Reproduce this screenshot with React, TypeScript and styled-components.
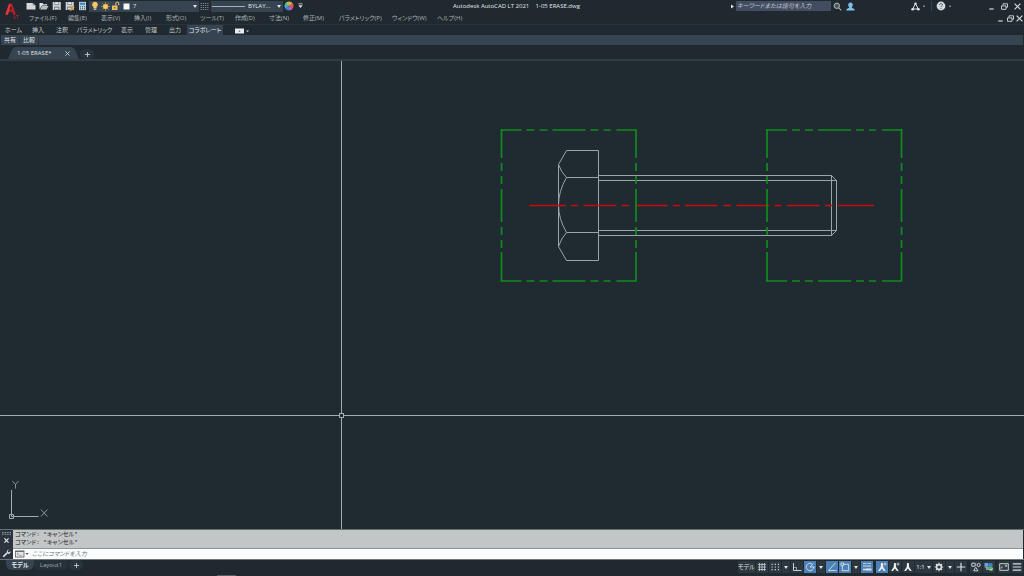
import React from "react";
import styled, { createGlobalStyle, css } from "styled-components";

const color = {
  base: "#1f292f",
  canvas: "#1f2a31",
  panel: "#364350",
  button: "#2c373f",
  active: "#4c81b8",
  text: "#c3c8ca",
  bright: "#e4e8ea",
  line: "#a3abaf",
};

const GlobalStyle = createGlobalStyle`
  * { box-sizing: border-box; }
  body {
    margin: 0;
    background: ${color.base};
    color: ${color.text};
    font-family: "Open Sans", "Noto Sans CJK JP", sans-serif;
    font-size: 6px;
    line-height: 10px;
    font-feature-settings: "palt";
  }
  button, input, select {
    margin: 0;
    padding: 0;
    border: 0;
    background: none;
    color: inherit;
    font: inherit;
    font-feature-settings: inherit;
    outline: none;
  }
  svg { display: block; flex: none; }
`;

const Page = styled.div`
  display: flex;
  flex-direction: column;
  min-height: 100vh;
`;

/* ---------- title bar ---------- */

const TitleBar = styled.header`
  display: grid;
  grid-template-columns: 1fr auto 1fr;
  align-items: center;
  height: 12px;
`;

const TitleGroup = styled.div<{ $end?: boolean }>`
  display: flex;
  align-items: center;
  justify-content: ${(p) => (p.$end ? "flex-end" : "flex-start")};
  height: 12px;
`;

const Title = styled.h1`
  margin: 0;
  padding-left: 9px;
  font-size: 6px;
  font-weight: 400;
  line-height: 12px;
  color: ${color.bright};
  white-space: pre;
`;

const AppButton = styled.button`
  width: 24px;
  height: 12px;
  overflow: visible;
`;

const IconButton = styled.button<{ $w?: number }>`
  display: flex;
  align-items: center;
  justify-content: center;
  flex: none;
  width: ${(p) => p.$w ?? 13}px;
  height: 12px;
`;

const ComboBox = styled.div<{ $w: number }>`
  display: flex;
  align-items: center;
  width: ${(p) => p.$w}px;
  height: 11px;
  padding-right: 2px;
  background: ${color.panel};
`;

const ComboSelect = styled.select`
  appearance: none;
  flex: 1;
  min-width: 0;
  height: 11px;
  padding-left: 2px;
  color: ${color.bright};
`;

const SearchInput = styled.input`
  width: 95px;
  height: 10px;
  padding-left: 1px;
  background: #414d61;
  &::placeholder { color: ${color.text}; font-style: italic; opacity: 1; }
`;

const Divider = styled.span`
  width: 1px;
  height: 10px;
  background: ${color.panel};
`;

const Spacer = styled.span<{ $w: number }>`
  flex: none;
  width: ${(p) => p.$w}px;
`;

/* ---------- menu and ribbon ---------- */

const MenuBar = styled.nav`
  display: flex;
  align-items: center;
  height: 13px;
  padding-left: 29px;
  border-bottom: 1px solid #28343d;
`;

const MenuItem = styled.button<{ $w: number }>`
  flex: none;
  width: ${(p) => p.$w}px;
  text-align: left;
  white-space: nowrap;
  color: #aeb4b7;
`;

const WindowControls = styled.div`
  display: flex;
  margin-left: auto;
`;

const RibbonTabs = styled.div`
  display: flex;
  height: 10px;
  padding-left: 1px;
`;

const RibbonTab = styled.button<{ $w: number; $active?: boolean }>`
  flex: none;
  width: ${(p) => p.$w}px;
  height: 10px;
  white-space: nowrap;
  ${(p) =>
    p.$active &&
    css`
      background: ${color.panel};
      color: ${color.bright};
    `}
`;

const RibbonPanels = styled.div`
  display: flex;
  align-items: center;
  height: 10px;
  margin: 0 1px;
  background: ${color.panel};
  color: ${color.bright};
`;

const PanelButton = styled.button`
  height: 10px;
  width: 19px;
  border-right: 1px solid #2c3843;
`;

const FileTabs = styled.div`
  display: flex;
  align-items: flex-end;
  height: 16px;
  padding-left: 8px;
  border-bottom: 2px solid #303c47;
`;

const FileTab = styled.div`
  display: flex;
  align-items: center;
  justify-content: space-between;
  width: 71px;
  height: 12px;
  padding: 0 9px;
  background: ${color.panel};
  color: ${color.bright};
  clip-path: polygon(0 100%, 4px 20%, 7px 0, 64px 0, 67px 20%, 100% 100%);
`;

const RoundButton = styled.button`
  display: flex;
  align-items: center;
  justify-content: center;
  width: 14px;
  height: 10px;
  margin: 0 1px;
  border-radius: 5px;
  background: #29343c;
`;

/* ---------- drawing area ---------- */

const Canvas = styled.main`
  position: relative;
  flex: 1;
  min-height: 240px;
  overflow: hidden;
  background: ${color.canvas};
`;

const Drawing = styled.svg`
  position: absolute;
  inset: 0;
  width: 100%;
  height: 100%;
`;

const UcsIcon = styled.svg`
  position: absolute;
  left: 0;
  bottom: 0;
`;

/* ---------- command window ---------- */

const CommandWindow = styled.section`
  display: flex;
  height: 31px;
  border-top: 1px solid #65706f;
  border-bottom: 1px solid #6e7678;
`;

const CommandGrip = styled.div`
  display: flex;
  flex-direction: column;
  align-items: center;
  justify-content: space-between;
  width: 13px;
  padding: 2px 0 1px;
  background: #2b343f;
`;

const GripButton = styled.button`
  display: flex;
  justify-content: center;
  width: 13px;
`;

const CommandBody = styled.div`
  display: flex;
  flex-direction: column;
  flex: 1;
  margin-right: 1px;
`;

const CommandLog = styled.div`
  height: 19px;
  padding: 1px 2px;
  background: #c3c6c6;
  border-bottom: 1px solid #8f9494;
  color: #1d2122;
  font-family: "Liberation Mono", "Noto Sans CJK JP", monospace;
  line-height: 8px;
`;

const LogLine = styled.p`
  margin: 0;
`;

const CommandRow = styled.label`
  display: flex;
  align-items: center;
  flex: 1;
  padding-left: 2px;
  background: #fbfdfd;
`;

const CommandInput = styled.input`
  flex: 1;
  height: 10px;
  margin-left: 3px;
  color: #222;
  &::placeholder { color: #6a6f70; font-style: italic; opacity: 1; }
`;

/* ---------- status bar ---------- */

const StatusBar = styled.footer`
  position: relative;
  display: flex;
  justify-content: space-between;
  height: 16px;
  padding: 0 1px 0 6px;
`;

const LayoutTabs = styled.div`
  display: flex;
  height: 10px;
`;

const LayoutTab = styled.button<{ $active?: boolean }>`
  width: ${(p) => (p.$active ? 28 : 34)}px;
  height: 10px;
  border-radius: 0 0 6px 6px;
  font-weight: ${(p) => (p.$active ? 600 : 400)};
  background: ${(p) => (p.$active ? color.panel : "#263139")};
  color: ${(p) => (p.$active ? color.bright : "#a5acb0")};
`;

const StatusTools = styled.div`
  display: flex;
  gap: 1px;
  padding-top: 1px;
`;

const StatusButton = styled.button<{ $w?: number; $on?: boolean; $gap?: boolean }>`
  display: flex;
  align-items: center;
  justify-content: center;
  gap: 2px;
  width: ${(p) => p.$w ?? 12}px;
  height: 12px;
  margin-left: ${(p) => (p.$gap ? 2 : 0)}px;
  background: ${(p) => (p.$on ? color.active : color.button)};
  color: ${color.bright};
  white-space: nowrap;
`;

const DockHandle = styled.span`
  position: absolute;
  left: 217px;
  bottom: 0;
  width: 19px;
  height: 1px;
  background: #5a6063;
`;

/* ---------- icons ---------- */

const Triangle = ({ size = 4 }: { size?: number }) => (
  <svg width={size} height="3" viewBox="0 0 4 3"><path d="M0 0h4L2 3z" fill="#dfe3e5" /></svg>
);

const Cross = ({ size = 5, stroke = "#d5dadc", width = 1 }: { size?: number; stroke?: string; width?: number }) => (
  <svg width={size} height={size} viewBox="0 0 6 6"><path d="M.5.5l5 5M5.5.5l-5 5" stroke={stroke} strokeWidth={width} /></svg>
);

const Plus = ({ size = 5 }: { size?: number }) => (
  <svg width={size} height={size} viewBox="0 0 5 5"><path d="M2.5 0v5M0 2.5h5" stroke="#c3c9cc" strokeWidth=".9" /></svg>
);

const AppLogo = () => (
  <svg width="24" height="20" viewBox="0 0 24 20">
    <path d="M5.300 14.500L9.200 3.500h2.800l3.900 11-2.700.2-1-3H8.900l-1 3zM9.500 9.600h2.300l-1.200-4z" fill="#b81f27" />
    <path d="M5.300 14.500L9.200 3.500l1.500 1.400-2.800 9.800z" fill="#e2383c" />
    <path d="M14.200 15.200v3h1.500M16.200 15.500h2.400m-1.200 0v2.900" stroke="#b0262c" strokeWidth=".9" fill="none" />
  </svg>
);

const NewIcon = () => (
  <svg width="10" height="8" viewBox="0 0 10 8"><path d="M.5 1h6l3 2.5V7.5h-9z" fill="#d4d8d8" /><path d="M6.5 1v2.5h3" fill="#9ba3a6" /></svg>
);
const OpenIcon = () => (
  <svg width="10" height="8" viewBox="0 0 10 8"><path d="M.5 7.2V1h3l1 1.2h3.7v1.2H3z" fill="#e2e5e5" /><path d="M1 7.5l2.2-3.5h6.3l-2 3.5z" fill="#b9bfc1" /></svg>
);
const SaveIcon = ({ pen }: { pen?: boolean }) => (
  <svg width="10" height="10" viewBox="0 0 10 10">
    <path d="M.7 1h8.1v8H.7z" fill="#cdd2d4" />
    <path d="M2.6 1h4.4v2.8H2.6z" fill="#606b72" /><path d="M3.1 1.2h3.4v2H3.1z" fill="#e9ecec" />
    <path d="M2.3 5.7h5v3.3h-5z" fill="#56636c" /><path d="M3 6.5h3.6v2H3z" fill="#d7dbdc" />
    {pen && <path d="M4.300 9.300l3.500-4.500 2 1.300-3.500 3.600z" fill="#d9a04c" />}
  </svg>
);
const PlotIcon = () => (
  <svg width="9" height="10" viewBox="0 0 9 10">
    <path d="M1 .8h7v8.4H1z" fill="#b9cddb" /><path d="M2 1.8h5v2H2z" fill="#3e87c2" />
    <path d="M2 5.2h1v1H2zm2 0h1v1H4zm2 0h1v1H6zM2 7.2h1v1H2zm2 0h1v1H4zm2 0h1v1H6z" fill="#40505c" />
  </svg>
);
const BulbIcon = () => (
  <svg width="8" height="10" viewBox="0 0 8 10"><path d="M4 .8a2.9 2.9 0 0 1 1.6 5.3v1.2H2.4V6.1A2.9 2.9 0 0 1 4 .8z" fill="#f6c667" /><path d="M2.7 7.6h2.6v1.2H2.7z" fill="#d8dcdd" /></svg>
);
const SunIcon = () => (
  <svg width="9" height="9" viewBox="0 0 9 9">
    <path d="M4.5 0v9M0 4.5h9M1.3 1.3l6.4 6.4M7.7 1.3L1.3 7.7" stroke="#c69a4b" strokeWidth=".8" /><circle cx="4.5" cy="4.5" r="2.5" fill="#f7c862" />
  </svg>
);
const LockIcon = () => (
  <svg width="9" height="10" viewBox="0 0 9 10"><path d="M1 4.5h5.5v4.5H1z" fill="#f0bd61" /><path d="M4.8 4.5V2.6a1.5 1.5 0 0 1 3 0v1.6" fill="none" stroke="#f0cf92" strokeWidth="1" /><path d="M3.2 6h1.1v1.6H3.2z" fill="#6b5126" /></svg>
);
const SwatchIcon = () => (
  <svg width="7" height="7" viewBox="0 0 7 7"><rect x=".5" y=".5" width="6" height="6" fill="#f4f6f6" /></svg>
);
const LinetypeIcon = () => (
  <svg width="9" height="9" viewBox="0 0 9 9">
    <path d="M.5 1.5h8M.5 3.5h8M.5 5.5h8M.5 7.5h8" stroke="#76818a" strokeWidth="1" strokeDasharray="1.4 .8" />
  </svg>
);
const ColorWheelIcon = () => (
  <svg width="10" height="10" viewBox="-5 -5 10 10">
    <path d="M0 0L0-4.5A4.5 4.5 0 0 1 3.9-2.2z" fill="#f0a23e" />
    <path d="M0 0L3.9-2.2A4.5 4.5 0 0 1 3.9 2.2z" fill="#ea5a4c" />
    <path d="M0 0L3.9 2.2A4.5 4.5 0 0 1 0 4.5z" fill="#b65bc0" />
    <path d="M0 0L0 4.5A4.5 4.5 0 0 1-3.9 2.2z" fill="#3f7fe0" />
    <path d="M0 0L-3.9 2.2A4.5 4.5 0 0 1-3.9-2.2z" fill="#45b6d6" />
    <path d="M0 0L-3.9-2.2A4.5 4.5 0 0 1 0-4.5z" fill="#8fc865" />
  </svg>
);
const CustomizeIcon = () => (
  <svg width="5" height="6" viewBox="0 0 5 6"><path d="M.5.8h4" stroke="#d5dadc" strokeWidth=".8" /><path d="M.3 2.3h4.4L2.5 5z" fill="#d5dadc" /></svg>
);
const SearchIcon = () => (
  <svg width="9" height="9" viewBox="0 0 9 9"><circle cx="3.8" cy="3.8" r="2.7" fill="#4b5860" stroke="#bfc5c8" strokeWidth=".9" /><path d="M5.8 5.8l2.4 2.5" stroke="#c7a98a" strokeWidth="1.1" /></svg>
);
const UserIcon = () => (
  <svg width="9" height="9" viewBox="0 0 9 9"><path d="M4.5.4c1.4 0 2.3 1 2.3 2.4S5.8 5.3 5.7 5.7c.3.6 3 .7 3 2.7H.3c0-2 2.7-2.1 3-2.7C3.2 5.3 2.2 4.2 2.2 2.8S3.1.4 4.500.4z" fill="#80c1ea" /></svg>
);
const AutodeskIcon = () => (
  <svg width="9" height="9" viewBox="0 0 9 9"><path d="M4.5 1.5L1.7 7h5.6z" fill="none" stroke="#d9dddf" strokeWidth="1" /><circle cx="4.5" cy="1.6" r="1.2" fill="#e6e9ea" /><circle cx="1.6" cy="7.2" r="1.3" fill="#e6e9ea" /><circle cx="7.4" cy="7.2" r="1.3" fill="#e6e9ea" /></svg>
);
const HelpIcon = () => (
  <svg width="10" height="10" viewBox="0 0 10 10"><circle cx="5" cy="5" r="4.4" fill="#d5d9db" /><path d="M3.6 4c0-2 2.9-1.8 2.9-.2C6.5 4.9 5 4.9 5 6.1" fill="none" stroke="#47525a" strokeWidth=".9" /><circle cx="5" cy="7.5" r=".6" fill="#47525a" /></svg>
);
const MinimizeIcon = () => (
  <svg width="5" height="7" viewBox="0 0 5 7"><path d="M.3 6h4.4" stroke="#d5dadc" strokeWidth="1.2" /></svg>
);
const RestoreIcon = () => (
  <svg width="7" height="7" viewBox="0 0 7 7" fill="none" stroke="#d5dadc" strokeWidth=".9"><path d="M2 2.5V.8h4.5v3.4H5" /><path d="M.5 2.9H5v3.4H.5z" /></svg>
);
const RibbonStateIcon = () => (
  <svg width="14" height="6" viewBox="0 0 14 6"><rect width="9" height="5" y=".5" fill="#e8ebeb" /><path d="M3.5 3.7L4.5 2.3l1 1.4z" fill="#505a60" /><path d="M11 2.5h3l-1.5 1.8z" fill="#c3c9cc" /></svg>
);
const GripIcon = () => (
  <svg width="9" height="3" viewBox="0 0 9 3"><path d="M0 .6h9M0 2.3h9" stroke="#a5adb3" strokeWidth=".9" strokeDasharray="1 .6" /></svg>
);
const WrenchIcon = () => (
  <svg width="9" height="9" viewBox="0 0 9 9"><path d="M1.2 7.800l3.700-3.700" stroke="#e4e8ea" strokeWidth="1.5" /><path d="M7 .6L5.7 2l.3 1.1 1.1.3L8.5 2C9 4 7.5 5.2 5.9 4.8 4.2 4.3 4.2 1.2 7 .6z" fill="#e4e8ea" /></svg>
);
const PromptIcon = () => (
  <svg width="14" height="8" viewBox="0 0 14 8"><rect x=".5" y=".9" width="8.5" height="6.2" fill="#e4e6e6" stroke="#585e60" strokeWidth=".8" /><path d="M.5 1.5H9" stroke="#585e60" strokeWidth=".8" /><path d="M2 3l1.5 1.1L2 5.2M4.2 5.7h2.5" fill="none" stroke="#585e60" strokeWidth=".6" /><path d="M10.5 3h3.2l-1.6 2z" fill="#555" /></svg>
);

const statusGlyphs = {
  grid: <path d="M2.5 1v8M5 1v8M7.5 1v8M1 2.5h8M1 5h8M1 7.5h8" strokeWidth=".7" />,
  snap: <path d="M1.5 2.300h8M1.500 5h8M1.500 7.700h8" strokeDasharray="1.200 2" strokeWidth="1.200" />,
  ortho: <><path d="M1.5 1v7.5H9.5" /><path d="M1.5 5.5h3v3" strokeWidth=".6" /></>,
  polar: <><path d="M8.7 5A3.7 3.7 0 1 1 6.800 1.800" /><path d="M5 5h4.500M5 5l3.300-3.500" /></>,
  iso: <path d="M8.5 1L1.5 8.5H9.5" />,
  osnap: <><path d="M2.3 2.300h6.400v6.400H2.300z" /><path d="M1 1h2.600v2.600H1z" fill="#4c81b8" /></>,
  weight: <><path d="M1 1.500h3.500M5.500 1.500H9" strokeWidth=".8" /><path d="M1 4h3.500M1 4h8" strokeWidth="1.200" /><path d="M1 7.500h3" strokeWidth="1.600" /><path d="M4 7.500h5.500" strokeWidth="2.200" /></>,
  annotation: <path d="M4 1h1.800l.3 4L8.700 9H6.900L4.900 6.600 2.900 9H1.100l2.600-4z" fill="#eef1f2" stroke="none" />,
  spark: <path d="M8 .6v3M6.5 2.100h3" strokeWidth=".8" />,
  gear: <><circle cx="5" cy="5" r="2.400" strokeWidth="1.600" /><path d="M5 .8v1.700M5 7.500v1.700M.8 5h1.700M7.500 5h1.700M2 2l1.200 1.200M6.800 6.800L8 8M8 2L6.800 3.200M3.200 6.800L2 8" strokeWidth="1.200" /></>,
  plus: <path d="M5 .7v8.6M.7 5h8.6" strokeWidth="1.2" />,
  isolate: <><path d="M.8 1.2h3.400v3H.8z" /><circle cx="7.600" cy="3" r="1.600" /><path d="M4.800 5.300L7 8.800H2.700z" /></>,
  screen: <><path d="M.7 1.700h8.600v6.600H.7z" /><path d="M2.200 6.800V5h1.800M5.500 3.200h2.200V5M7.500 3.400L5.700 5" strokeWidth=".7" /></>,
  menu: <path d="M.8 1.8h8.400M.8 5h8.400M.8 8.200h8.400" strokeWidth="1.2" />,
};

const StatusGlyph = ({ names }: { names: (keyof typeof statusGlyphs)[] }) => (
  <svg width="10" height="10" viewBox="0 0 10 10" fill="none" stroke="#d9dee0" strokeWidth=".9">
    {names.map((n) => <React.Fragment key={n}>{statusGlyphs[n]}</React.Fragment>)}
  </svg>
);

const GraphicsIcon = () => (
  <svg width="10" height="10" viewBox="0 0 10 10">
    <path d="M.5 1h4v3.5h-4zM2 5h4v3H2z" fill="#5ea7e0" /><circle cx="6.5" cy="3.3" r="2.2" fill="#3f86c8" />
    <circle cx="7" cy="7" r="2.3" fill="#63a844" /><path d="M.5 4.5h3v1h-3z" fill="#d9a04c" /><path d="M5.9 7l.9 1 1.6-1.9" stroke="#eef" strokeWidth=".7" fill="none" />
  </svg>
);

/* ---------- drawing entities ---------- */

const edge = (spans: number[][], at: number, vertical?: boolean) =>
  spans.map(([a, b]) => (vertical ? `M${at} ${a}V${b}` : `M${a} ${at}H${b}`)).join("");

const across = [[-1, 20], [25, 33], [38, 46], [51, 84], [89, 97], [102, 109], [115, 135]];
const down = [[-1, 28], [33, 41], [46, 54], [59, 92], [97, 105], [110, 118], [122, 151]];

const Boundary = ({ x, y }: { x: number; y: number }) => (
  <path
    transform={`translate(${x} ${y})`}
    d={edge(across, 0) + edge(across, 151) + edge(down, 0, true) + edge(down, 134.5, true)}
    stroke="#0f8d1b"
    strokeWidth="1.7"
  />
);

const centerSpans = [
  [529.5, 566], [571, 578], [583.5, 616], [621.5, 629], [637, 667.5], [673, 680], [685, 717.5],
  [723.5, 731], [736.5, 769], [774.5, 781.5], [787, 819.5], [825, 832.5], [838, 874],
];

const Bolt = () => (
  <g stroke="#9ca4a8" strokeWidth="1">
    <path d="M566.5 89.5H598.5V199.5H566.5L558.5 185.5V103.5z" />
    <path d="M598.5 116.5H566.5M598.5 171.5H566.5" />
    <path d="M558.5 103.5Q561 111 566.5 116.5Q550.5 144 566.5 171.5Q561 177.5 558.5 185.5" />
    <path d="M598.5 114.5H831.5L836.5 119.5V169.5L831.5 174.5H598.5" />
    <path d="M598.5 119.5H836.5M598.5 169.5H836.5M831.5 114.5V174.5" />
  </g>
);

const menus: [string, number][] = [
  ["ファイル(F)", 39], ["編集(E)", 33], ["表示(V)", 33], ["挿入(I)", 32], ["形式(O)", 34], ["ツール(T)", 35],
  ["作成(D)", 34], ["寸法(N)", 34], ["修正(M)", 36], ["パラメトリック(P)", 53], ["ウィンドウ(W)", 45], ["ヘルプ(H)", 34],
];

const ribbonTabs: [string, number][] = [
  ["ホーム", 25], ["挿入", 24], ["注釈", 24], ["パラメトリック", 41], ["表示", 24], ["管理", 24], ["出力", 24], ["コラボレート", 36],
];

export default function App() {
  return (
    <Page>
      <GlobalStyle />
      <TitleBar>
        <TitleGroup>
          <AppButton aria-label="アプリケーション"><AppLogo /></AppButton>
          <IconButton aria-label="新規"><NewIcon /></IconButton>
          <IconButton aria-label="開く"><OpenIcon /></IconButton>
          <IconButton aria-label="保存"><SaveIcon /></IconButton>
          <IconButton aria-label="名前を付けて保存"><SaveIcon pen /></IconButton>
          <IconButton aria-label="印刷"><PlotIcon /></IconButton>
          <ComboBox $w={110}>
            <Spacer $w={1} />
            <IconButton $w={10} aria-label="表示"><BulbIcon /></IconButton>
            <IconButton $w={10} aria-label="フリーズ"><SunIcon /></IconButton>
            <IconButton $w={11} aria-label="ロック"><LockIcon /></IconButton>
            <IconButton $w={10} aria-label="色"><SwatchIcon /></IconButton>
            <ComboSelect aria-label="画層" defaultValue="7"><option>7</option></ComboSelect>
            <Triangle />
          </ComboBox>
          <IconButton $w={11} aria-label="線種"><LinetypeIcon /></IconButton>
          <Spacer $w={1} />
          <ComboBox $w={72}>
            <svg width="35" height="3"><path d="M1 1.5H34" stroke="#aab1b5" /></svg>
            <ComboSelect aria-label="線種の選択" defaultValue="BYLAY..."><option>BYLAY...</option></ComboSelect>
            <Triangle />
          </ComboBox>
          <IconButton $w={12} aria-label="色の管理"><ColorWheelIcon /></IconButton>
          <IconButton $w={10} aria-label="カスタマイズ"><CustomizeIcon /></IconButton>
        </TitleGroup>
        <Title>{"Autodesk AutoCAD LT 2021    1-05 ERASE.dwg"}</Title>
        <TitleGroup $end>
          <IconButton $w={6} aria-label="検索を折りたたむ">
            <svg width="3" height="5" viewBox="0 0 3 5"><path d="M0 .5v4L3 2.500z" fill="#dfe3e5" /></svg>
          </IconButton>
          <Spacer $w={1} />
          <SearchInput aria-label="検索" placeholder="キーワードまたは語句を入力" />
          <IconButton aria-label="検索"><SearchIcon /></IconButton>
          <IconButton aria-label="サインイン"><UserIcon /></IconButton>
          <Spacer $w={51} />
          <IconButton $w={15} aria-label="Autodesk App Store"><AutodeskIcon /></IconButton>
          <Triangle size={2} />
          <Spacer $w={6} />
          <Divider />
          <Spacer $w={2} />
          <IconButton aria-label="ヘルプ"><HelpIcon /></IconButton>
          <Spacer $w={2} />
          <Triangle size={2} />
          <Spacer $w={34} />
          <IconButton aria-label="最小化"><MinimizeIcon /></IconButton>
          <IconButton aria-label="元に戻す"><RestoreIcon /></IconButton>
          <IconButton aria-label="閉じる"><Cross size={7} /></IconButton>
        </TitleGroup>
      </TitleBar>

      <MenuBar aria-label="メニュー">
        {menus.map(([label, w]) => <MenuItem key={label} $w={w}>{label}</MenuItem>)}
        <WindowControls>
          <IconButton $w={10} aria-label="図面を最小化"><MinimizeIcon /></IconButton>
          <IconButton $w={10} aria-label="図面を元に戻す"><RestoreIcon /></IconButton>
          <IconButton $w={9} aria-label="図面を閉じる"><Cross size={7} /></IconButton>
        </WindowControls>
      </MenuBar>

      <RibbonTabs role="tablist">
        {ribbonTabs.map(([label, w], i) => (
          <RibbonTab key={label} role="tab" $w={w} $active={i === 7} aria-selected={i === 7}>{label}</RibbonTab>
        ))}
        <Spacer $w={12} />
        <IconButton $w={14} aria-label="リボンの表示"><RibbonStateIcon /></IconButton>
      </RibbonTabs>
      <RibbonPanels>
        <PanelButton>共有</PanelButton>
        <PanelButton>比較</PanelButton>
      </RibbonPanels>
      <FileTabs>
        <FileTab>
          <span>1-05 ERASE*</span>
          <button aria-label="タブを閉じる"><Cross /></button>
        </FileTab>
        <RoundButton aria-label="新しい図面"><Plus /></RoundButton>
      </FileTabs>

      <Canvas>
        <Drawing fill="none" role="img" aria-label="六角ボルト">
          <Bolt />
          <path d={edge(centerSpans, 144.5)} stroke="#cc0a0a" strokeWidth="1.4" />
          <Boundary x={501.5} y={69} />
          <Boundary x={767} y={69} />
          <line x1="341.5" x2="341.5" y1="0" y2="100%" stroke={color.line} />
          <line x1="0" x2="100%" y1="354.5" y2="354.5" stroke={color.line} />
          <rect x="339.5" y="352.5" width="4" height="4" fill={color.canvas} stroke={color.line} />
        </Drawing>
        <UcsIcon width="52" height="52" fill="none" stroke={color.line}>
          <path d="M11.5 13V39.5H38.5M9.5 37.5h4v4h-4z" />
          <path d="M12.500 4l3 3.500v4M18.500 4l-3 3.500M41 32.500l6.500 7M47.500 32.500l-6.500 7" strokeWidth=".8" />
        </UcsIcon>
      </Canvas>

      <CommandWindow aria-label="コマンド ウィンドウ">
        <CommandGrip>
          <GripIcon />
          <GripButton aria-label="閉じる"><Cross stroke="#eef1f2" width={1.3} /></GripButton>
          <Spacer $w={1} />
          <GripButton aria-label="カスタマイズ"><WrenchIcon /></GripButton>
        </CommandGrip>
        <CommandBody>
          <CommandLog role="log">
            <LogLine>コマンド: *キャンセル*</LogLine>
            <LogLine>コマンド: *キャンセル*</LogLine>
          </CommandLog>
          <CommandRow>
            <PromptIcon />
            <CommandInput aria-label="コマンド" placeholder="ここにコマンドを入力" />
          </CommandRow>
        </CommandBody>
      </CommandWindow>

      <StatusBar>
        <LayoutTabs>
          <LayoutTab $active>モデル</LayoutTab>
          <LayoutTab>Layout1</LayoutTab>
          <RoundButton aria-label="レイアウトを追加"><Plus /></RoundButton>
        </LayoutTabs>
        <StatusTools>
          <StatusButton $w={17}>モデル</StatusButton>
          <StatusButton aria-label="グリッド"><StatusGlyph names={["grid"]} /></StatusButton>
          <StatusButton aria-label="スナップ"><StatusGlyph names={["snap"]} /></StatusButton>
          <StatusButton $w={8} aria-label="スナップ設定"><Triangle /></StatusButton>
          <StatusButton aria-label="直交モード"><StatusGlyph names={["ortho"]} /></StatusButton>
          <StatusButton $on aria-label="極トラッキング"><StatusGlyph names={["polar"]} /></StatusButton>
          <StatusButton $w={8} aria-label="極の設定"><Triangle /></StatusButton>
          <StatusButton $on aria-label="スナップ トラッキング"><StatusGlyph names={["iso"]} /></StatusButton>
          <StatusButton $on aria-label="オブジェクト スナップ"><StatusGlyph names={["osnap"]} /></StatusButton>
          <StatusButton $w={8} aria-label="オブジェクト スナップ設定"><Triangle /></StatusButton>
          <StatusButton $on aria-label="線の太さ"><StatusGlyph names={["weight"]} /></StatusButton>
          <StatusButton $on $gap aria-label="注釈の表示"><StatusGlyph names={["annotation", "spark"]} /></StatusButton>
          <StatusButton aria-label="自動尺度"><StatusGlyph names={["annotation", "spark"]} /></StatusButton>
          <StatusButton aria-label="注釈尺度"><StatusGlyph names={["annotation"]} /></StatusButton>
          <StatusButton $w={17}>1:1<Triangle /></StatusButton>
          <StatusButton aria-label="ワークスペース"><StatusGlyph names={["gear"]} /></StatusButton>
          <StatusButton $w={8} aria-label="ワークスペース設定"><Triangle /></StatusButton>
          <StatusButton aria-label="注釈モニター"><StatusGlyph names={["plus"]} /></StatusButton>
          <StatusButton $gap aria-label="選択表示"><StatusGlyph names={["isolate"]} /></StatusButton>
          <StatusButton aria-label="グラフィックス"><GraphicsIcon /></StatusButton>
          <StatusButton $gap aria-label="フルスクリーン"><StatusGlyph names={["screen"]} /></StatusButton>
          <StatusButton aria-label="カスタマイズ"><StatusGlyph names={["menu"]} /></StatusButton>
        </StatusTools>
        <DockHandle />
      </StatusBar>
    </Page>
  );
}
